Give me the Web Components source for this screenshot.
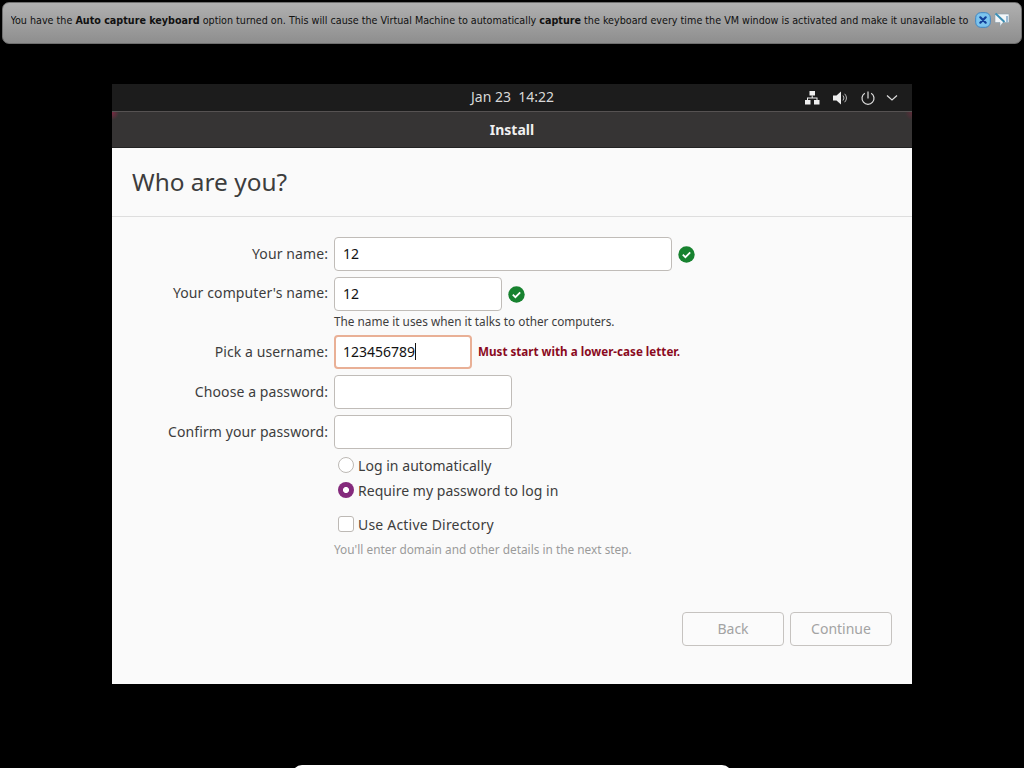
<!DOCTYPE html>
<html lang="en"><head><meta charset="utf-8"><title>Install</title>
<style>
html,body{margin:0;height:100%;background:#000;overflow:hidden}
body{font-family:"Noto Sans","Open Sans",sans-serif;display:flex;flex-direction:column;position:relative;height:768px}
</style></head><body>
<vm-notice>You have the <b>Auto capture keyboard</b> option turned on. This will cause the Virtual Machine to automatically <b>capture</b> the keyboard every time the VM window is activated and make it unavailable to</vm-notice>
<vm-screen>
  <gnome-panel slot="panel"></gnome-panel>
  <title-bar slot="title">Install</title-bar>
  <page-heading slot="heading">Who are you?</page-heading>
  <who-form slot="body"></who-form>
  <wizard-actions slot="actions"></wizard-actions>
</vm-screen>
<bottom-sliver></bottom-sliver>
<script>
function def(name,html,setup){
  customElements.define(name,class extends HTMLElement{
    constructor(){super();const r=this.attachShadow({mode:'open'});r.innerHTML=html;if(setup)setup(this,r);}
  });
}
def('vm-notice',`<style>
:host{display:flex;align-items:center;box-sizing:border-box;margin:2px 2px 0;height:42px;padding:0 11px 6px 7.500px;border-radius:7px;border:1px solid #6f6f6f;background:linear-gradient(#b0b0b0,#8e8e8e);font:10.68px "DejaVu Sans Condensed","DejaVu Sans",sans-serif;color:#111;white-space:nowrap}
.t{flex:1;min-width:0;overflow:hidden}
.i{display:flex;gap:3px;align-items:center;margin-left:5px}
svg{display:block}
</style><div class="t"><slot></slot></div>
<div class="i">
<svg width="16" height="16" viewBox="0 0 16 16"><rect x=".7" y=".7" width="14.6" height="14.6" rx="5" fill="#7cc4ee" stroke="#3f86c4"/><path d="M5.3 5.3l5.4 5.4M10.700 5.300l-5.400 5.400" stroke="#123f9a" stroke-width="2.200" stroke-linecap="round"/></svg>
<svg width="16" height="16" viewBox="0 0 16 16"><path d="M1 2h14v8.500H9l-3 4v-4H1z" fill="#f3f6f8" stroke="#8aa0ad" stroke-width=".6"/><path d="M1.500 1.500l9 8.500" stroke="#3b8fb5" stroke-width="2"/><path d="M13 4v6" stroke="#7fa6c8" stroke-width="1.500"/></svg>
</div>`);
def('vm-screen',`<style>
:host{display:flex;flex-direction:column;box-sizing:border-box;width:800px;height:600px;margin:40px 0 0 112px;background:#fafafa;color:#3d3d3d;font-size:14px}
.grow{flex:1}
</style><slot name="panel"></slot><slot name="title"></slot><slot name="heading"></slot><slot name="body"></slot><div class="grow"></div><slot name="actions"></slot>`);
def('gnome-panel',`<style>
:host{display:grid;grid-template-columns:1fr auto 1fr;align-items:center;height:27px;background:#1c1c1c;color:#d8d8d8;font-size:14px}
.c{grid-column:2;padding-bottom:2px;margin-left:1px}
.r{justify-self:end;display:flex;align-items:center;gap:12px;padding-right:14px;color:#e4e4e4}
svg{display:block}
</style><span class="c">Jan 23&nbsp; 14:22</span>
<div class="r">
<svg width="16" height="16" viewBox="0 0 16 16" fill="#f0f0f0"><rect x="5.500" y="1" width="5.500" height="4.500"/><rect x="1" y="10" width="5.500" height="4.500"/><rect x="10" y="10" width="5.500" height="4.500"/><path d="M7.700 5.500h1V7.500H13.500v2.500h-1V8.500H4v1.500H3V7.500h4.700z"/></svg>
<svg width="16" height="16" viewBox="0 0 16 16"><path d="M1 5.500H4.500L9 1.500v13l-4.500-4H1z" fill="#eee"/><path d="M11 5.500a4 4 0 0 1 0 5M12.700 3.800a6.500 6.500 0 0 1 0 8.400" fill="none" stroke="#bbb" stroke-width="1"/></svg>
<svg width="16" height="16" viewBox="0 0 16 16" fill="none" stroke="#ddd" stroke-width="1.200"><path d="M4.800 3.200a6 6 0 1 0 6.400 0"/><path d="M8 1.500v7"/></svg>
<svg style="margin-left:-2px" width="12" height="16" viewBox="0 0 12 16" fill="none" stroke="#ddd" stroke-width="1.200"><path d="M1 5.500L6 10l5-4.500"/></svg>
</div>`);
def('title-bar',`<style>
:host{display:flex;align-items:center;justify-content:center;box-sizing:border-box;height:37px;border-top:1px solid #565252;border-bottom:1px solid #232323;background:radial-gradient(circle 7px at 0 1px,#7a2a42,transparent),radial-gradient(circle 7px at 100% 1px,#5c2c38,transparent),#363434;background-clip:padding-box;color:#f0f0f0;font-weight:700;font-size:14px}
</style><span><slot></slot></span>`);
def('page-heading',`<style>
:host{display:flex;align-items:center;box-sizing:border-box;height:69px;padding:0 0 1px 20px;border-bottom:1px solid #dedede;font-size:24.4px;color:#3d3d3d}
</style><slot></slot>`);
def('text-box',`<style>
:host{display:flex;align-items:center;box-sizing:border-box;height:34px;padding:0 0 2px 8px;background:#fff;border:1px solid #c0bcb8;border-radius:4px;font-size:14px;color:#111}
:host([error]){border:2px solid #e9b096;padding:0 0 1px 7px}
</style><slot></slot>`);
def('ok-mark',`<style>:host{display:block;width:17px;height:17px}svg{display:block}</style>
<svg width="17" height="17" viewBox="0 0 17 17"><circle cx="8.500" cy="8.500" r="8.200" fill="#17822f"/><path d="M4.800 8.700l2.600 2.500 4.800-4.800" fill="none" stroke="#fff" stroke-width="1.800"/></svg>`);
def('opt-radio',`<style>
:host{display:flex;align-items:center;gap:4px;height:20px;font-size:14px;letter-spacing:.04px}
span{box-sizing:border-box;width:16px;height:16px;border-radius:50%;background:#fff;border:1px solid #bdb9b5;display:block}
:host([on]) span{background:radial-gradient(circle,#fff 0 2.700px,#842a7c 3.300px);border:0}
</style><span></span><slot></slot>`);
def('opt-check',`<style>
:host{display:flex;align-items:center;gap:4px;height:20px;font-size:14px;letter-spacing:.2px}
span{box-sizing:border-box;width:16px;height:16px;border-radius:3px;background:#fff;border:1px solid #bdb9b5;display:block}
</style><span></span><slot></slot>`);
def('who-form',`<style>
:host{display:grid;grid-template-columns:216px 1fr;column-gap:6px;padding-top:20px;font-size:14px}
.l{justify-self:end;align-self:center;white-space:nowrap;letter-spacing:.1px}
.f{display:flex;align-items:center;gap:6px}
.n{font-size:11.8px;line-height:18px}
.e{color:#8a0a1e;font-weight:700;font-size:11.65px;margin-bottom:2px}
.d{color:#9a9a9a;font-size:11.85px}
.c{grid-column:2}
</style>
<span class="l" style="margin-bottom:2px">Your name:</span><div class="f"><text-box style="width:338px">12</text-box><ok-mark></ok-mark></div>
<span class="l" style="margin:4px 0 2px">Your computer's name:</span><div class="f" style="margin-top:6px"><text-box style="width:168px">12</text-box><ok-mark></ok-mark></div>
<div class="c n" style="height:24px;line-height:20px">The name it uses when it talks to other computers.</div>
<span class="l" style="margin-bottom:2px">Pick a username:</span><div class="f"><text-box error style="width:138px">123456789<b style="display:inline-block;width:1px;height:17px;background:#111"></b></text-box><span class="e">Must start with a lower-case letter.</span></div>
<span class="l" style="margin:6px 0 2px">Choose a password:</span><div class="f" style="margin-top:6px"><text-box style="width:178px"></text-box></div>
<span class="l" style="margin:6px 0 2px">Confirm your password:</span><div class="f" style="margin-top:6px"><text-box style="width:178px"></text-box></div>
<opt-radio class="c" style="margin:6px 0 0 4px">Log in automatically</opt-radio>
<opt-radio on class="c" style="margin:5px 0 0 4px">Require my password to log in</opt-radio>
<opt-check class="c" style="margin:14px 0 0 4px">Use Active Directory</opt-check>
<div class="c n d" style="margin-top:6px">You'll enter domain and other details in the next step.</div>`);
def('wizard-btn',`<style>
:host{display:flex;align-items:center;justify-content:center;box-sizing:border-box;width:102px;height:34px;padding-bottom:2px;background:#fbfbfb;border:1px solid #c6c3c0;border-radius:4px;color:#a3a3a3;font-size:14px}
</style><slot></slot>`);
def('wizard-actions',`<style>
:host{display:flex;justify-content:flex-end;gap:6px;padding:0 20px 38px}
</style><wizard-btn>Back</wizard-btn><wizard-btn>Continue</wizard-btn>`);
def('bottom-sliver',`<style>
:host{position:absolute;left:292px;top:765px;width:440px;height:20px;background:#fff;border-radius:10px}
</style>`);
</script>
</body></html>
